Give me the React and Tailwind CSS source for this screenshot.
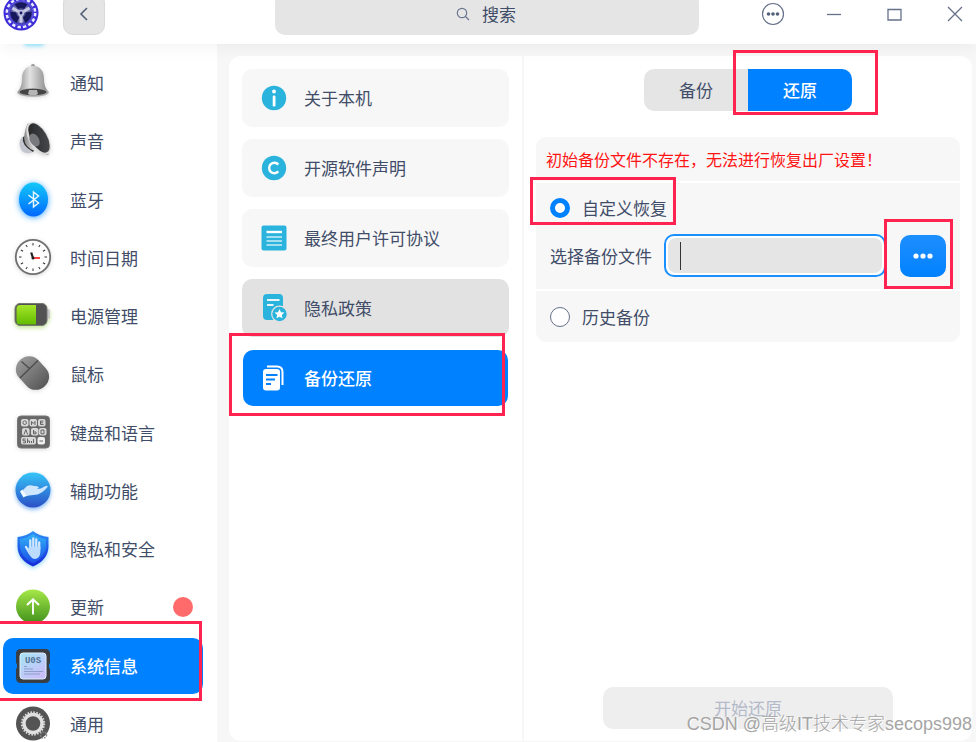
import { useState } from "react";

function AppLogo() {
  return (
    <svg viewBox="0 0 36 36" className="size-9">
      <defs>
        <radialGradient id="logoHub">
          <stop offset="0" stopColor="#34357e" />
          <stop offset="0.7" stopColor="#7478ae" />
          <stop offset="1" stopColor="#3a35c0" />
        </radialGradient>
      </defs>
      <circle cx="18" cy="18" r="17.5" fill="#3b2bd8" />
      <circle cx="18" cy="18" r="14.2" fill="none" stroke="#e8e9ff" strokeWidth="2.6" strokeDasharray="3.4 2.18" />
      <circle cx="18" cy="18" r="12.6" fill="#5a55d8" />
      <circle cx="18" cy="18" r="11.5" fill="url(#logoHub)" />
      {[0, 120, 240].map((a) => (
        <g key={a} transform={`rotate(${a} 18 18)`}>
          <path d="M11.500 9.500 Q18 5 24.500 9.500 L21 14 Q18 12.500 15 14Z" fill="#17175c" />
          <path d="M18 18 L26.5 13" stroke="#c9cbe4" strokeWidth="3" />
        </g>
      ))}
      <circle cx="18" cy="18" r="3.2" fill="#b9bcdc" />
      <circle cx="18" cy="18" r="1.4" fill="#1a1766" />
    </svg>
  );
}

function BellIcon() {
  return (
    <svg viewBox="0 0 40 40" className="size-10 shrink-0 drop-shadow-sm">
      <defs>
        <linearGradient id="bell">
          <stop offset="0" stopColor="#8c8c8c" />
          <stop offset="0.4" stopColor="#e2e2e2" />
          <stop offset="1" stopColor="#858585" />
        </linearGradient>
      </defs>
      <circle cx="20" cy="3" r="2" fill="#999" />
      <path d="M20 3 C12 3 9 9 9 16 C9 22 7 26 4.500 29 H35.500 C33 26 31 22 31 16 C31 9 28 3 20 3Z" fill="url(#bell)" />
      <ellipse cx="20" cy="29.500" rx="15.800" ry="4.200" fill="#aaa" />
      <ellipse cx="20" cy="29" rx="13.500" ry="3.200" fill="#444" />
      <path d="M16 27 h8 l1 4 q-5 3 -10 0Z" fill="#b5b5b5" />
    </svg>
  );
}

function SpeakerIcon() {
  return (
    <svg viewBox="0 0 40 40" className="size-10 shrink-0 drop-shadow-sm">
      <defs>
        <linearGradient id="coneIn" x2="1" y2="1">
          <stop offset="0" stopColor="#222" />
          <stop offset="1" stopColor="#4c4f52" />
        </linearGradient>
        <linearGradient id="coneOut">
          <stop offset="0" stopColor="#888" />
          <stop offset="0.5" stopColor="#eee" />
          <stop offset="1" stopColor="#a0a0a0" />
        </linearGradient>
      </defs>
      <path d="M9 16 Q4 22 9 30 Q14 34 20 31 L13 16Z" fill="#c3c5cf" />
      <path d="M10 16 Q8 24 20 31 L22 28 L14 14Z" fill="#333" />
      <path d="M15 2 Q12 7 11 17 Q12 27 22 30 Q30 34 36 34Z" fill="url(#coneOut)" />
      <ellipse cx="25.500" cy="17.500" rx="9.500" ry="18" transform="rotate(-30 25.500 17.500)" fill="#dcdcdc" />
      <ellipse cx="26" cy="17" rx="8" ry="16.300" transform="rotate(-30 26 17)" fill="url(#coneIn)" />
      <ellipse cx="21.500" cy="19" rx="4.500" ry="7" transform="rotate(-30 21.500 19)" fill="#77797c" />
    </svg>
  );
}

function BluetoothIcon() {
  return (
    <svg viewBox="0 0 40 40" className="size-10 shrink-0 drop-shadow-[0_1px_3px_#3aa5ff]">
      <defs>
        <linearGradient id="bt" x2="0" y2="1">
          <stop offset="0" stopColor="#12c8f8" />
          <stop offset="1" stopColor="#0068ff" />
        </linearGradient>
      </defs>
      <ellipse cx="20.500" cy="19.500" rx="14.500" ry="17" fill="url(#bt)" />
      <path d="M15.500 15 L25.500 23 L20.500 27 V12 L25.500 16 L15.500 24" fill="none" stroke="#e8f7ff" strokeWidth="1.500" />
    </svg>
  );
}

function ClockIcon() {
  return (
    <svg viewBox="0 0 40 40" className="size-10 shrink-0 drop-shadow-sm">
      <circle cx="20" cy="19" r="17.200" fill="#fdfdfd" stroke="#707070" strokeWidth="1.800" />
      {[0, 30, 60, 90, 120, 150, 180, 210, 240, 270, 300, 330].map((a) => (
        <path key={a} d="M20 5 V7.500" stroke="#333" strokeWidth="1" transform={`rotate(${a} 20 19)`} />
      ))}
      <path d="M20 20 H27" stroke="#f44" strokeWidth="2" />
      <path d="M20 20 L18.200 14.500" stroke="#222" strokeWidth="2.200" />
      <circle cx="20" cy="20" r="1.500" fill="#222" />
    </svg>
  );
}

function BatteryIcon() {
  return (
    <svg viewBox="0 0 40 40" className="size-10 shrink-0 drop-shadow-[0_2px_2px_#c6e59a]">
      <defs>
        <linearGradient id="charge" x2="0" y2="1">
          <stop offset="0" stopColor="#a4e52a" />
          <stop offset="1" stopColor="#62bc00" />
        </linearGradient>
      </defs>
      <rect x="33" y="13" width="4" height="10" rx="2" fill="#c8c8c8" />
      <rect x="2" y="7.500" width="32" height="22" rx="5" fill="#525252" stroke="#777" />
      <path d="M7 9 H23 V28.500 H7 Q3.500 28.500 3.500 25 V12.500 Q3.500 9 7 9Z" fill="url(#charge)" />
    </svg>
  );
}

function MouseIcon() {
  return (
    <svg viewBox="0 0 40 40" className="size-10 shrink-0 drop-shadow-sm">
      <defs>
        <linearGradient id="mouse" x1="0.500" x2="0.500" y2="1">
          <stop offset="0" stopColor="#989898" />
          <stop offset="1" stopColor="#585858" />
        </linearGradient>
      </defs>
      <rect x="6.500" y="1" width="26" height="36" rx="12.500" transform="rotate(-43 19.500 19)" fill="url(#mouse)" />
      <path d="M7 24 L25 6.500 M8.500 7.500 L16.500 14.500" stroke="#4a4a4a" strokeWidth="1.200" fill="none" />
    </svg>
  );
}

function KeyboardIcon() {
  return (
    <svg viewBox="0 0 40 40" className="size-10 shrink-0 drop-shadow-sm">
      <rect x="4.500" y="3" width="32" height="32" rx="3.500" fill="#686868" stroke="#777" />
      <g fill="#d8d8d8">
        {[8, 16.500, 25].map((x) => (
          <rect key={x} x={x} y="6" width="7.500" height="7.500" rx="2" />
        ))}
        {[9, 18, 26].map((x) => (
          <rect key={x} x={x} y="15" width="7.500" height="7.500" rx="2" />
        ))}
        <rect x="8" y="24" width="15" height="7.500" rx="2" />
        <rect x="24.500" y="24" width="7.500" height="7.500" rx="2" fill="#f0f0f0" />
      </g>
      <g stroke="#666" fill="none" strokeWidth="1">
        <circle cx="11.700" cy="9.700" r="1.800" />
        <path d="M18.500 12 V8.500 L20.200 10.500 L22 8.500 V12 M30.500 8 H27.500 V11.500 H30.500 M27.500 9.800 H30" />
        <path d="M11 21.500 L12.800 16.500 L14.600 21.500 M20.500 17 V20.800 H23 V19 H20.500 M28 17 V20.800 H31 V17Z" />
        <path d="M12.500 26 H10 V27.800 H12.500 V29.800 H10 M14.500 25.500 V30 M14.500 28 H16.500 V30 M18.500 28 V30 M20.500 26 V30 M26.500 28 H30" />
      </g>
    </svg>
  );
}

function AssistIcon() {
  return (
    <svg viewBox="0 0 40 40" className="size-10 shrink-0 drop-shadow-[0_2px_2px_#7db4f5]">
      <defs>
        <linearGradient id="assist" x2="0" y2="1">
          <stop offset="0" stopColor="#35c5f8" />
          <stop offset="1" stopColor="#2b4fc6" />
        </linearGradient>
      </defs>
      <circle cx="20" cy="19" r="17.500" fill="url(#assist)" />
      <path d="M10 19 L14 15 Q17 13.500 21 15 Q25 14.500 26 16.500 L24 18 Q28 18 31.500 15.500 Q35 14 34.500 16 Q30 21.500 24.500 23.500 L16 24.500 L12 25.500Z" fill="#cfe6ff" />
      <path d="M7 20.500 L9.500 18.500 L13.500 24.500 L10.500 26.500Z" fill="#f3f9ff" />
    </svg>
  );
}

function ShieldIcon() {
  return (
    <svg viewBox="0 0 40 40" className="size-10 shrink-0 drop-shadow-[0_2px_2px_#9fdcf8]">
      <defs>
        <linearGradient id="shield" x2="0" y2="1">
          <stop offset="0" stopColor="#2e90f5" />
          <stop offset="1" stopColor="#1528d8" />
        </linearGradient>
        <linearGradient id="shieldIn" x2="0" y2="1">
          <stop offset="0" stopColor="#30b0f5" />
          <stop offset="1" stopColor="#1c4fe8" />
        </linearGradient>
      </defs>
      <path d="M20 2 Q26 7 35.500 8 V18 Q35 31 20 37.500 Q5 31 4.500 18 V8 Q14 7 20 2Z" fill="url(#shield)" />
      <path d="M20 5 Q25.500 9 33 10 V18 Q32 28.500 20 34.500 Q8 28.500 7 18 V10 Q14.500 9 20 5Z" fill="url(#shieldIn)" />
      <g stroke="#d3e8ff" strokeWidth="2.300" strokeLinecap="round" fill="none">
        <path d="M17.300 20 V11.500 M20.300 20 V9.500 M23.300 20 V10.500 M26.200 20 V13.500 M13 18 L16.500 24" />
      </g>
      <path d="M16 17.500 H27.400 V23 Q27 30 21.500 30 Q18 30 14.500 22Z" fill="#bcdcff" />
    </svg>
  );
}

function UpdateIcon() {
  return (
    <svg viewBox="0 0 40 40" className="size-10 shrink-0">
      <defs>
        <linearGradient id="update" x2="0" y2="1">
          <stop offset="0" stopColor="#a6e848" />
          <stop offset="1" stopColor="#40901c" />
        </linearGradient>
      </defs>
      <circle cx="20" cy="19.500" r="17" fill="url(#update)" />
      <path d="M20 27.500 V12.500 M14 18 L20 12.200 L26 18" fill="none" stroke="#fff" strokeWidth="1.900" />
    </svg>
  );
}

function SystemIcon() {
  return (
    <svg viewBox="0 0 40 40" className="size-10 shrink-0">
      <defs>
        <linearGradient id="chip" x2="0.600" y2="1">
          <stop offset="0" stopColor="#a5e6f5" />
          <stop offset="1" stopColor="#c9bff8" />
        </linearGradient>
      </defs>
      <path d="M8 3 H32 Q37 3 37 8 V17 L36 18 V22 L37 23 V32 Q37 37 32 37 H8 Q3 37 3 32 V23 L4 22 V18 L3 17 V8 Q3 3 8 3Z" fill="#3a3d42" />
      <rect x="7" y="7" width="26" height="26" rx="3" fill="url(#chip)" stroke="#dff1ff" />
      <text x="20" y="17" textAnchor="middle" fontSize="9" fontWeight="bold" fontFamily="Liberation Mono, monospace" fill="#4f7398">U0S</text>
      <path d="M11 20.500 H14 M11 23 H20 M11 25.500 H30 M11 28 H27" stroke="#8f9fcd" strokeWidth="1" />
    </svg>
  );
}

function GeneralIcon() {
  return (
    <svg viewBox="0 0 40 40" className="size-10 shrink-0">
      <circle cx="20" cy="19.500" r="17" fill="#545454" />
      <circle cx="20" cy="19.500" r="11.200" fill="none" stroke="#d5d5d5" strokeWidth="2" strokeDasharray="1.600 1.330" />
      <circle cx="20" cy="19.500" r="9" fill="none" stroke="#e0e0e0" strokeWidth="3.400" />
      <circle cx="30.500" cy="31" r="3" fill="none" stroke="#888" strokeWidth="1.500" strokeDasharray="1.500 1" />
    </svg>
  );
}

function InfoIcon() {
  return (
    <svg viewBox="0 0 26 26" className="size-[26px] shrink-0">
      <circle cx="13" cy="13" r="12.200" fill="#2ab3dc" />
      <circle cx="13" cy="6.500" r="1.900" fill="#fff" />
      <rect x="11.700" y="10.500" width="2.800" height="11" rx="1.200" fill="#fff" />
    </svg>
  );
}

function CopyrightIcon() {
  return (
    <svg viewBox="0 0 26 26" className="size-[26px] shrink-0">
      <circle cx="13" cy="13" r="12.200" fill="#2ab3dc" />
      <path d="M17.300 9.600 A5.200 5.200 0 1 0 17.300 16.400" fill="none" stroke="#fff" strokeWidth="2.400" />
    </svg>
  );
}

function AgreementIcon() {
  return (
    <svg viewBox="0 0 26 26" className="size-[26px] shrink-0">
      <rect x="0.500" y="0.500" width="25" height="25" rx="2" fill="#2ab3dc" />
      <path d="M5.500 7 H21" stroke="#fff" strokeWidth="2.400" />
      <path d="M5.500 12 H21 M5.500 16 H21 M5.500 20 H21" stroke="#c9eef8" strokeWidth="1.300" />
    </svg>
  );
}

function PolicyIcon() {
  return (
    <svg viewBox="0 0 26 26" className="size-[26px] shrink-0 overflow-visible">
      <path d="M6 -1 H18 Q22 -1 22 3 V11 Q12 11 11 19 Q11.500 23 13 25 H6 Q2 25 2 21 V3 Q2 -1 6 -1Z" fill="#2ab3dc" />
      <path d="M6 5 H18.500 M6 10 H12.500" stroke="#e8f6fa" strokeWidth="2" />
      <circle cx="18.500" cy="19" r="7.800" fill="#2ab3dc" stroke="#e2e2e2" strokeWidth="1.200" />
      <path d="M18.500 14 L20 17.200 L23.400 17.600 L20.900 20 L21.500 23.300 L18.500 21.700 L15.500 23.300 L16.100 20 L13.600 17.600 L17 17.200Z" fill="#fff" />
    </svg>
  );
}

function BackupIcon() {
  return (
    <svg viewBox="0 0 26 26" className="size-[26px] shrink-0">
      <path d="M6 1.500 H16 Q21.500 1.500 21.500 7 V20" fill="none" stroke="#fff" strokeWidth="2" />
      <rect x="2" y="4" width="17" height="21.500" rx="3" fill="#fff" />
      <path d="M5 10 H16.500 M5 14.500 H14 M5 19 H10" stroke="#0081ff" strokeWidth="1.900" />
    </svg>
  );
}

// red outline laid over a control to point it out
function Highlight({ className }) {
  return <span aria-hidden="true" className={`pointer-events-none absolute z-10 border-[3px] border-[#ff2350] ${className}`} />;
}

const modules = [
  { id: "notification", label: "通知", Icon: BellIcon },
  { id: "sound", label: "声音", Icon: SpeakerIcon },
  { id: "bluetooth", label: "蓝牙", Icon: BluetoothIcon },
  { id: "datetime", label: "时间日期", Icon: ClockIcon },
  { id: "power", label: "电源管理", Icon: BatteryIcon },
  { id: "mouse", label: "鼠标", Icon: MouseIcon },
  { id: "keyboard", label: "键盘和语言", Icon: KeyboardIcon },
  { id: "assist", label: "辅助功能", Icon: AssistIcon },
  { id: "privacy", label: "隐私和安全", Icon: ShieldIcon },
  { id: "update", label: "更新", Icon: UpdateIcon, badge: true },
  { id: "system", label: "系统信息", Icon: SystemIcon },
  { id: "general", label: "通用", Icon: GeneralIcon },
];

const pages = [
  { id: "about", label: "关于本机", Icon: InfoIcon },
  { id: "opensource", label: "开源软件声明", Icon: CopyrightIcon },
  { id: "eula", label: "最终用户许可协议", Icon: AgreementIcon },
  { id: "policy", label: "隐私政策", Icon: PolicyIcon, hovered: true },
  { id: "backup", label: "备份还原", Icon: BackupIcon },
];

const radioClass =
  "size-5 shrink-0 appearance-none rounded-full border border-[#65708a] bg-white checked:border-[5px] checked:border-[#0081ff]";

export default function App() {
  const [activeModule, setActiveModule] = useState("system");
  const [activePage, setActivePage] = useState("backup");
  const [tab, setTab] = useState("restore");
  const [mode, setMode] = useState("custom");
  const [path, setPath] = useState("");

  return (
    <div className="relative flex h-screen flex-col overflow-hidden bg-[#f7f7f7] font-['Noto_Sans_CJK_SC',sans-serif] text-[17px] leading-6 text-[#414d68]">
      <header className="z-10 flex h-11 shrink-0 items-end bg-white pr-[9px] pb-[9px] pl-[3px] shadow-[0_0_20px_rgba(0,0,0,0.07)]">
        <div className="mb-1 shrink-0">
          <AppLogo />
        </div>
        <button aria-label="返回" className="ml-6 flex h-[42px] w-[42px] shrink-0 items-center justify-center rounded-[10px] border border-[#dadada] bg-[#e5e5e5]">
          <svg viewBox="0 0 16 16" className="size-4" fill="none" stroke="#526079" strokeWidth="1.600">
            <path d="M11 2 L5 8 L11 14" />
          </svg>
        </button>
        <label className="ml-[170px] flex h-[42px] flex-1 items-center justify-center gap-3 rounded-[10px] bg-[#e5e5e5]">
          <svg viewBox="0 0 14 14" className="size-3.5" fill="none" stroke="#6b7690" strokeWidth="1.200">
            <circle cx="6" cy="6" r="4.700" />
            <path d="M9.500 9.500 L13 13" />
          </svg>
          <input type="text" aria-label="搜索" placeholder="搜索" className="w-9 bg-transparent outline-none placeholder:text-[#414d68]" />
        </label>
        <div className="ml-[62px] flex h-[42px] w-[206px] shrink-0 items-center justify-between">
          <button aria-label="菜单">
            <svg viewBox="0 0 24 24" className="size-6" fill="#526079">
              <circle cx="12" cy="12" r="10.500" fill="none" stroke="#65708a" strokeWidth="1.200" />
              <circle cx="7.500" cy="12" r="1.800" />
              <circle cx="12" cy="12" r="1.800" />
              <circle cx="16.500" cy="12" r="1.800" />
            </svg>
          </button>
          <button aria-label="最小化">
            <svg viewBox="0 0 24 24" className="size-6" stroke="#65708a" strokeWidth="1.300">
              <path d="M5 12.500 H19" />
            </svg>
          </button>
          <button aria-label="最大化">
            <svg viewBox="0 0 24 24" className="size-6" fill="none" stroke="#65708a" strokeWidth="1.300">
              <path d="M6 7.500 H19 V18 H6Z" />
            </svg>
          </button>
          <button aria-label="关闭">
            <svg viewBox="0 0 24 24" className="size-6" stroke="#65708a" strokeWidth="1.300">
              <path d="M5 5 L19 19 M19 5 L5 19" />
            </svg>
          </button>
        </div>
      </header>

      <div className="flex min-h-0 flex-1">
        <nav className="relative flex w-[217px] shrink-0 flex-col bg-white pt-2.5">
          {/* glow of the entry that is scrolled out of view */}
          <span className="absolute -top-1 left-6 h-1.5 w-5 rounded-full bg-[#8fe6ff] blur-[2px]" />
          <ul className="-mb-[11px] flex flex-1 flex-col">
            {modules.map(({ id, label, Icon, badge }) => (
              <li key={id} className="relative flex flex-1 items-center pr-3.5 pl-[3px]">
                <button
                  onClick={() => setActiveModule(id)}
                  className={`flex h-14 w-full items-center gap-[17px] rounded-[10px] pr-2.5 pl-2.5 text-left ${activeModule === id ? "bg-[#0081ff] font-medium text-white" : ""}`}
                >
                  <Icon />
                  {label}
                  {badge && <span className="ml-auto size-5 rounded-full bg-[#ff6b6b]" />}
                </button>
                {id === "system" && <Highlight className="-top-4 -bottom-1.5 left-0 w-[202px] border-l-0" />}
              </li>
            ))}
          </ul>
        </nav>

        <main className="mt-3 mr-1 mb-px ml-3 flex min-w-0 flex-1 rounded-xl bg-white">
          <ul className="flex w-[295px] shrink-0 flex-col gap-3 border-r-2 border-[#f7f7f7] px-[13px] pt-[13px]">
            {pages.map(({ id, label, Icon, hovered }) => (
              <li key={id} className={`relative h-[58px] ${activePage === id ? "p-px" : ""}`}>
                <button
                  onClick={() => setActivePage(id)}
                  className={`flex h-full w-full items-center rounded-[10px] text-left ${activePage === id ? "gap-[17px] bg-[#0081ff] pl-[18px] font-medium text-white" : "gap-[17px] pl-[19px]"} ${activePage !== id && (hovered ? "bg-[#e2e2e2]" : "bg-[#f7f7f7]")}`}
                >
                  <Icon />
                  {label}
                </button>
                {id === "backup" && <Highlight className="-top-4 right-1 -bottom-[9px] -left-[13px]" />}
              </li>
            ))}
          </ul>

          <section className="flex min-w-0 flex-1 flex-col px-3 pt-[13px] pb-3">
            <div className="relative flex h-[42px] self-center">
              <button
                onClick={() => setTab("backup")}
                className={`w-[104px] rounded-l-[10px] ${tab === "backup" ? "bg-[#0081ff] font-medium text-white" : "bg-[#e5e5e5]"}`}
              >
                备份
              </button>
              <button
                onClick={() => setTab("restore")}
                className={`w-[104px] rounded-r-[10px] ${tab === "restore" ? "bg-[#0081ff] font-medium text-white" : "bg-[#e5e5e5]"}`}
              >
                还原
              </button>
              <Highlight className="-top-[19px] -right-[26px] -bottom-1 left-[89px]" />
            </div>

            <div className="mt-[26px] flex flex-col gap-0.5">
              <p className="flex h-11 items-center rounded-t-[10px] bg-[#f7f7f7] px-2.5 text-base text-[#ff1414]">
                初始备份文件不存在，无法进行恢复出厂设置！
              </p>
              <div className="relative bg-[#f7f7f7] px-3.5 py-3">
                <label className="flex h-[26px] w-fit items-center gap-3">
                  <input type="radio" name="mode" checked={mode === "custom"} onChange={() => setMode("custom")} className={radioClass} />
                  自定义恢复
                </label>
                <Highlight className="-top-1.5 -left-1.5 h-12 w-[146px]" />
                <div className="mt-[13px] flex h-[43px] items-center">
                  <label htmlFor="backup-path" className="shrink-0">选择备份文件</label>
                  <div className="relative ml-3 h-full min-w-0 flex-1 rounded-[10px] border-2 border-[#1a90ff] bg-white p-0.5">
                    <input
                      id="backup-path"
                      type="text"
                      value={path}
                      onChange={(e) => setPath(e.target.value)}
                      className="h-full w-full rounded-lg bg-[#e5e5e5] px-3 caret-transparent outline-none"
                    />
                    <span className="absolute top-1.5 left-3.5 h-7 w-px bg-[#333]" />
                  </div>
                  <div className="relative ml-3.5 h-[42px] w-[46px] shrink-0">
                    <button aria-label="浏览" className="flex h-full w-full items-center justify-center rounded-[10px] bg-linear-to-b from-[#1c8fff] to-[#0081ff]">
                      <svg viewBox="0 0 20 6" className="h-1.5 w-5" fill="#fff">
                        <circle cx="3" cy="3" r="2.600" />
                        <circle cx="10" cy="3" r="2.600" />
                        <circle cx="17" cy="3" r="2.600" />
                      </svg>
                    </button>
                    <Highlight className="-top-4 -right-[7px] -bottom-3 -left-4" />
                  </div>
                </div>
              </div>
              <div className="flex h-[51px] items-center rounded-b-[10px] bg-[#f7f7f7] px-3.5">
                <label className="flex items-center gap-3">
                  <input type="radio" name="mode" checked={mode === "history"} onChange={() => setMode("history")} className={radioClass} />
                  历史备份
                </label>
              </div>
            </div>

            <button disabled className="mt-auto h-[42px] w-[290px] self-center rounded-[10px] bg-[#eeeeee] text-[#b4bac9]">
              开始还原
            </button>
          </section>
        </main>
      </div>

      <span className="pointer-events-none absolute right-1 bottom-1.5 z-20 font-['Liberation_Sans','Noto_Sans_CJK_SC',sans-serif] text-[18px] font-light text-[#a5a5a5] [text-shadow:1px_1px_0_#fff]">
        CSDN @高级IT技术专家secops998
      </span>
    </div>
  );
}
